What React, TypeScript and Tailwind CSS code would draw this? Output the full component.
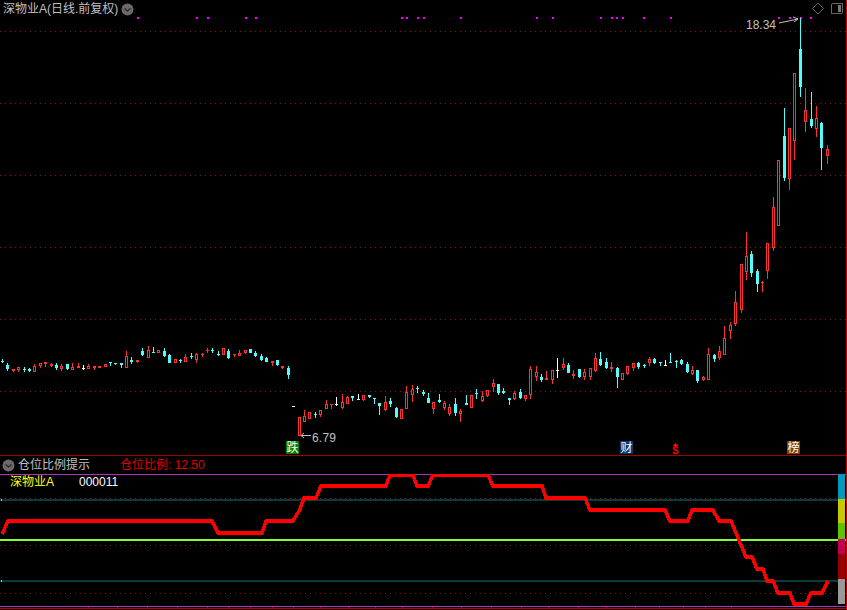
type Kind = 'r' | 'c' | 'w'
type Row = [Kind, number, number, number, number]

// kind, high, body top, body bottom, low. Groups are measured at 3x from the given y.
const seg = (top: number, rows: Row[]): Row[] =>
  rows.map(([k, h, t, b, l]) => [
    k,
    Math.round(top + h / 3),
    Math.round(top + t / 3),
    Math.round(top + b / 3),
    Math.round(top + l / 3),
  ])

const CANDLES: Row[] = [
  ...seg(340, [
    ['c', 57, 62, 64, 69], ['c', 69, 74, 88, 93], ['r', 88, 88, 93, 95], ['r', 81, 82, 89, 95],
    ['c', 82, 87, 89, 96], ['c', 84, 87, 92, 96], ['r', 72, 78, 95, 97], ['r', 70, 70, 78, 84],
    ['r', 67, 67, 72, 81], ['r', 70, 72, 77, 81], ['c', 70, 75, 83, 91], ['r', 72, 78, 87, 92],
    ['c', 71, 72, 87, 89], ['r', 69, 82, 90, 90], ['r', 70, 78, 83, 84], ['w', 75, 83, 84, 90],
    ['r', 73, 78, 87, 88], ['r', 78, 78, 85, 90], ['r', 78, 78, 83, 84], ['r', 72, 72, 80, 81],
    ['c', 67, 67, 70, 78], ['c', 69, 69, 71, 75], ['c', 69, 70, 74, 84], ['r', 33, 48, 84, 85],
    ['c', 51, 61, 65, 72], ['r', 60, 60, 66, 70], ['c', 23, 33, 46, 48], ['r', 18, 30, 54, 55],
    ['c', 20, 36, 38, 39], ['r', 30, 30, 38, 38], ['c', 24, 33, 47, 50], ['c', 42, 45, 68, 70],
    ['r', 56, 58, 69, 70], ['c', 56, 61, 63, 69], ['r', 43, 51, 65, 67], ['c', 39, 49, 52, 58],
    ['r', 40, 43, 60, 69], ['r', 39, 41, 44, 50], ['r', 24, 30, 32, 40], ['c', 24, 30, 32, 40],
    ['c', 33, 42, 44, 48], ['r', 24, 24, 45, 45], ['c', 27, 33, 53, 57], ['r', 42, 42, 45, 52],
    ['r', 30, 40, 47, 49], ['r', 30, 31, 38, 42], ['c', 26, 28, 38, 39], ['c', 34, 38, 47, 51],
    ['c', 42, 47, 60, 63], ['c', 51, 53, 65, 66], ['r', 63, 64, 68, 78], ['c', 60, 60, 75, 78],
    ['r', 78, 78, 84, 88], ['c', 78, 84, 105, 117], ['w', 198, 198, 199, 199], ['r', 232, 232, 288, 288],
    ['r', 210, 229, 245, 246], ['r', 217, 217, 236, 237], ['c', 216, 222, 224, 234], ['r', 210, 210, 226, 231],
    ['r', 180, 192, 207, 207], ['r', 192, 192, 193, 207], ['w', 171, 193, 195, 198], ['r', 162, 186, 203, 208],
    ['r', 168, 171, 191, 192], ['c', 168, 168, 173, 183], ['w', 161, 177, 179, 180], ['r', 165, 165, 180, 182],
    ['c', 165, 165, 170, 174], ['c', 174, 174, 178, 192], ['c', 189, 189, 197, 225], ['r', 168, 186, 210, 213],
    ['c', 175, 184, 192, 200], ['c', 201, 204, 231, 234], ['r', 207, 207, 236, 236], ['r', 138, 155, 206, 207],
    ['r', 135, 147, 166, 186], ['c', 138, 143, 148, 159], ['c', 150, 155, 162, 168], ['c', 159, 174, 189, 190],
    ['r', 186, 186, 207, 222], ['c', 162, 180, 186, 190], ['r', 183, 189, 204, 210], ['r', 192, 201, 222, 228],
    ['c', 174, 192, 219, 228], ['r', 207, 213, 222, 246], ['c', 165, 189, 195, 195], ['r', 165, 165, 204, 204],
    ['c', 147, 159, 162, 177], ['r', 153, 168, 184, 186], ['r', 150, 150, 168, 170], ['r', 117, 129, 141, 156],
    ['c', 132, 132, 159, 165], ['c', 144, 153, 159, 162], ['c', 174, 174, 180, 195], ['r', 153, 159, 177, 180],
    ['c', 147, 156, 174, 177], ['r', 165, 165, 177, 183], ['r', 78, 87, 165, 178], ['r', 78, 96, 111, 123],
    ['c', 102, 111, 120, 126], ['r', 93, 114, 120, 120], ['r', 90, 90, 120, 132], ['w', 54, 90, 92, 114],
    ['r', 54, 72, 84, 90], ['c', 69, 75, 99, 100], ['r', 90, 102, 108, 117], ['c', 87, 87, 111, 114],
    ['r', 87, 96, 111, 120], ['r', 84, 84, 111, 120], ['r', 40, 54, 93, 96],
  ]),
  ...seg(200, [
    ['c', 457, 477, 495, 497], ['c', 475, 487, 504, 507], ['r', 487, 501, 508, 517], ['c', 500, 504, 530, 564],
    ['r', 520, 520, 539, 540], ['r', 498, 499, 521, 524], ['r', 490, 490, 503, 513], ['c', 487, 490, 501, 507],
    ['c', 492, 496, 498, 504], ['r', 472, 477, 489, 498], ['c', 475, 477, 490, 492], ['c', 487, 487, 490, 498],
    ['w', 481, 494, 496, 497], ['c', 459, 486, 488, 489], ['c', 480, 482, 484, 504], ['c', 478, 481, 492, 495],
    ['c', 487, 492, 516, 519], ['r', 498, 511, 521, 525], ['c', 510, 510, 543, 549], ['r', 529, 532, 540, 543],
    ['r', 444, 462, 540, 540], ['c', 462, 465, 478, 486], ['r', 438, 453, 473, 480], ['r', 378, 415, 465, 465],
    ['r', 366, 375, 393, 417], ['r', 273, 306, 372, 378], ['r', 192, 192, 330, 339], ['r', 96, 168, 216, 240],
    ['c', 153, 162, 219, 231], ['c', 207, 213, 252, 276], ['r', 243, 246, 250, 276], ['r', 129, 129, 213, 237],
  ]),
  ...seg(0, [
    ['r', 591, 621, 744, 753], ['r', 481, 481, 678, 678], ['c', 325, 408, 533, 542], ['r', 385, 385, 536, 570],
    ['r', 220, 220, 422, 480], ['c', 55, 148, 260, 290], ['r', 265, 331, 365, 396], ['c', 277, 358, 378, 384],
    ['r', 318, 355, 386, 411], ['c', 366, 369, 444, 510], ['r', 435, 448, 467, 492],
  ]),
]

const COLORS: Record<Kind, string> = { r: '#ff3232', c: '#54fcfc', w: '#ffffff' }

const SIGNAL_DOTS = [
  137, 196, 207, 245, 255, 401, 406, 417, 423, 460, 536, 552, 600, 611, 616, 622, 643, 670, 778, 789, 800, 810,
]
const TOP_GRID = [31, 103, 175, 247, 319, 391]
const BOTTOM_TICKS = [
  88, 117, 147, 177, 207, 228, 250, 272, 293, 320, 348, 375, 402, 432, 461, 491, 521, 548, 578, 606, 635, 659, 683, 705, 731,
]
const POSITION_LINE =
  '2,535 8,522 212,522 218,534 262,534 266,522 293,522 300,510 304,499 316,499 321,487 386,487 390,476 413,476 417,487 428,487 433,476 488,476 493,487 542,487 546,499 585,499 590,511 665,511 670,522 688,522 692,511 713,511 719,522 731,522 746,558 752,558 757,570 763,570 767,582 773,582 778,594 790,594 794,605 806,605 811,594 822,594 828,582'

const LEVELS = [
  { cls: 'h-[25px] bg-[#0099bb]' },
  { cls: 'h-[24px] bg-[#c8c800]' },
  { cls: 'h-[16px] bg-[#5fc400]' },
  { cls: 'h-[15px] bg-[#c40050]' },
  { cls: 'h-[25px] bg-[#980000]' },
  { cls: 'h-[25px] bg-[#999999]' },
]

function Candle({ row, i }: { row: Row; i: number }) {
  const [kind, high, top, bottom, low] = row
  const x = Math.floor(2.6 + 5.39 * i)
  const color = COLORS[kind]
  const h = Math.max(bottom - top, 1)
  return (
    <g>
      <rect x={x} y={high} width={1} height={Math.max(low - high, 1)} fill={color} />
      <rect x={x - 1} y={top} width={3} height={h} fill={color} />
      {kind === 'r' && h > 2 && <rect x={x} y={top + 1} width={1} height={h - 2} fill="#000000" />}
    </g>
  )
}

function CircleChevron() {
  return (
    <svg width="13" height="13" viewBox="0 0 13 13" className="shrink-0">
      <circle cx="6.5" cy="6.5" r="6" fill="#6a6a6a" />
      <path d="M3.5 5.5 L6.5 8 L9.5 5.5" fill="none" stroke="#222222" strokeWidth="1.2" />
    </svg>
  )
}

function PriceChart() {
  return (
    <div className="relative h-[455px] shrink-0">
      <svg width="846" height="455" className="block" shapeRendering="crispEdges">
        {TOP_GRID.map((y) => (
          <line key={y} x1="0" x2="846" y1={y + 0.5} y2={y + 0.5} stroke="#8a1a1a" strokeDasharray="1 4" />
        ))}
        {SIGNAL_DOTS.map((x) => (
          <rect key={x} x={x} y={17} width={2} height={2} fill="#ff00ff" />
        ))}
        {CANDLES.map((row, i) => (
          <Candle key={i} row={row} i={i} />
        ))}
        <g fill="none" stroke="#c0c0c0" shapeRendering="auto">
          <path d="M779 23 L798 19 M793 17 L798 19 L794 22" />
          <path d="M311 435.5 L301 435.5 M304 433 L301 435.5 L304 438" />
        </g>
        <path d="M675 443 L678 446 L672 446 Z" fill="#ff0000" />
        <path d="M818 3 L823.5 8.5 L818 14 L812.5 8.5 Z" fill="none" stroke="#666666" shapeRendering="auto" />
        <rect x="831.5" y="3.5" width="11" height="10" rx="1.5" fill="none" stroke="#666666" />
        <rect x="838" y="5" width="3" height="7" fill="#777777" />
      </svg>

      <div className="absolute left-[3px] top-[1px] flex items-center gap-[3px]">
        <span className="text-[12px] leading-[16px] text-[#c0c0c0]">深物业A(日线.前复权)</span>
        <CircleChevron />
      </div>
      <span className="absolute left-[746px] top-[18px] text-[12px] leading-[14px] text-[#c0c0c0]">18.34</span>
      <span className="absolute left-[312px] top-[431px] text-[12px] leading-[14px] tracking-[0.2px] text-[#c0c0c0]">6.79</span>
      <span className="absolute left-[286px] top-[441px] flex h-[13px] w-[13px] items-center justify-center bg-[#008000] text-[12px] leading-none text-white">跌</span>
      <span className="absolute left-[620px] top-[441px] flex h-[13px] w-[13px] items-center justify-center bg-[#003a70] text-[12px] leading-none text-white">财</span>
      <span className="absolute left-[787px] top-[441px] flex h-[13px] w-[13px] items-center justify-center bg-[#7a4410] text-[12px] leading-none text-white">榜</span>
      <span className="absolute left-[672px] top-[446px] text-[10px] font-bold leading-[9px] text-[#ff0000]">S</span>
    </div>
  )
}

function PositionHeader() {
  return (
    <div className="flex h-[19px] shrink-0 items-center border-t border-[#a00000] pl-[2px]">
      <CircleChevron />
      <span className="ml-[3px] w-[102px] text-[12px] leading-[16px] text-[#c0c0c0]">仓位比例提示</span>
      <span className="text-[12px] leading-[16px] text-[#e00000]">仓位比例</span>
      <span className="text-[12px] leading-[16px] text-[#e00000]">: 12.50</span>
    </div>
  )
}

function PositionChart() {
  return (
    <div className="relative min-h-0 flex-1">
      {/* the drawing is in page coordinates, the panel starts at y=475 */}
      <svg width="846" height="136" viewBox="0 475 846 136" className="block" shapeRendering="crispEdges">
        <rect x="0" y="475" width="846" height="1" fill="#b030c0" />
        <line x1="0" x2="846" y1="499.5" y2="499.5" stroke="#8a1a1a" strokeDasharray="1 4" />
        <rect x="0" y="500" width="846" height="2" fill="#0d3a3a" />
        <rect x="0" y="540" width="846" height="2" fill="#80ff30" />
        <line x1="0" x2="846" y1="546.5" y2="546.5" stroke="#8a1a1a" strokeDasharray="1 4" />
        <rect x="0" y="581" width="846" height="2" fill="#0d3a3a" />
        <line x1="0" x2="846" y1="594.5" y2="594.5" stroke="#8a1a1a" strokeDasharray="1 4" />
        <rect x="1" y="500" width="1" height="2" fill="#c0c0c0" />
        <rect x="1" y="581" width="1" height="2" fill="#c0c0c0" />
        <polyline points={POSITION_LINE} fill="none" stroke="#ff0000" strokeWidth="3.5" />
        <rect x="0" y="607" width="846" height="1" fill="#b030c0" />
        <rect x="0" y="609" width="846" height="1" fill="#c00000" />
        {BOTTOM_TICKS.map((x) => (
          <rect key={x} x={x} y={608} width={1} height={1} fill="#c00000" />
        ))}
      </svg>

      <div className="absolute left-[10px] top-[1px] flex items-center gap-[25px] text-[12px] leading-[14px]">
        <span className="text-[#ffff00]">深物业A</span>
        <span className="text-white">000011</span>
      </div>
      <div className="absolute left-[838px] top-0 flex w-[7px] flex-col">
        {LEVELS.map((level) => (
          <div key={level.cls} className={level.cls} />
        ))}
      </div>
    </div>
  )
}

export default function App() {
  return (
    <div className="flex h-[610px] w-[847px] flex-col overflow-hidden border-r border-[#c00000] bg-black font-['Liberation_Sans','Noto_Sans_CJK_SC',sans-serif]">
      <PriceChart />
      <PositionHeader />
      <PositionChart />
    </div>
  )
}
